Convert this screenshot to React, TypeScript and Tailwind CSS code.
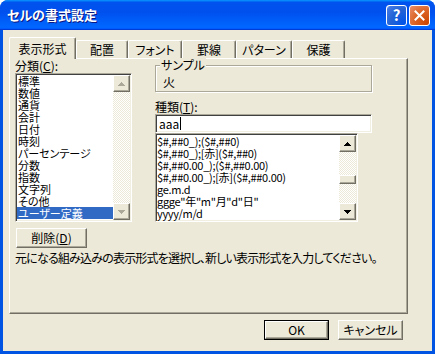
import React from "react";

const raised =
  "bg-[#ECE9D8] border border-t-white border-l-white border-r-[#716F64] border-b-[#716F64] shadow-[inset_-1px_-1px_#ACA899]";
const sunken =
  "border border-t-[#ACA899] border-l-[#ACA899] border-r-white border-b-white shadow-[inset_1px_1px_#404040,inset_-1px_-1px_#F1EFE2]";
const track =
  "bg-[image:repeating-conic-gradient(#fff_0_25%,#ECE9D8_0_50%)] bg-[length:2px_2px]";

const categories = [
  "標準",
  "数値",
  "通貨",
  "会計",
  "日付",
  "時刻",
  "パーセンテージ",
  "分数",
  "指数",
  "文字列",
  "その他",
  "ユーザー定義",
];

const formats = [
  "$#,##0_);($#,##0)",
  "$#,##0_);[赤]($#,##0)",
  "$#,##0.00_);($#,##0.00)",
  "$#,##0.00_);[赤]($#,##0.00)",
  "ge.m.d",
  'ggge"年"m"月"d"日"',
  "yyyy/m/d",
];

const tabs = [
  { label: "配置", w: "w-[52px]" },
  { label: "フォント", w: "w-[54px]" },
  { label: "罫線", w: "w-[54px]" },
  { label: "パターン", w: "w-[56px]" },
  { label: "保護", w: "w-[53px]" },
];

function Arrow({ up, disabled }: { up?: boolean; disabled?: boolean }) {
  const c = disabled ? "#ACA899" : "#000";
  const rows = up ? [0, 1, 2, 3] : [3, 2, 1, 0];
  return (
    <svg width="7" height="4" viewBox="0 0 7 4" shapeRendering="crispEdges">
      {rows.map((r, i) => (
        <rect key={i} x={3 - r} y={i} width={r * 2 + 1} height="1" fill={c} />
      ))}
    </svg>
  );
}

function ScrollBtn({ up, disabled }: { up?: boolean; disabled?: boolean }) {
  return (
    <div className={`${raised} flex h-[17px] w-[17px] items-center justify-center`}>
      <Arrow up={up} disabled={disabled} />
    </div>
  );
}

function Button({ children, isDefault }: { children: React.ReactNode; isDefault?: boolean }) {
  return (
    <div className={isDefault ? "border border-black" : ""}>
      <div
        className={`${raised} flex items-center justify-center ${
          isDefault ? "h-[18px] w-[63px]" : "h-[20px] w-[65px]"
        }`}
      >
        {children}
      </div>
    </div>
  );
}

export default function App() {
  return (
    <div className="h-[357px] w-[435px] bg-white font-['Noto_Sans_CJK_JP',sans-serif] text-[12px] leading-[12px] text-black [font-feature-settings:'palt']">
      <div className="flex h-[354px] w-[435px] flex-col overflow-hidden rounded-t-[8px] bg-[#0054E3]">
        {/* title bar */}
        <div className="flex h-[30px] items-center bg-[image:linear-gradient(180deg,#0997ff,#0053ee_8%,#0050ee_40%,#06f_88%,#06f_93%,#005bff_95%,#003dd7_96%,#003dd7)] pl-[7px] pr-[5px]">
          <span className="flex-1 text-[13px] font-bold text-white [text-shadow:1px_1px_#0A1883]">
            セルの書式設定
          </span>
          <div className="flex gap-[2px]">
            <div className="flex h-[21px] w-[21px] items-center justify-center rounded-[3px] border border-white bg-[image:radial-gradient(circle_at_90%_90%,#0054E9_0%,#2263D5_55%,#4479E4_90%,#fff_100%)] text-[15px] font-bold text-white">
              ?
            </div>
            <div className="flex h-[21px] w-[21px] items-center justify-center rounded-[3px] border border-white bg-[image:radial-gradient(circle_at_90%_90%,#CC4600_0%,#DC6527_55%,#E88F6E_100%)]">
              <svg width="11" height="11" viewBox="0 0 11 11">
                <path d="M1.5 1.5L9.5 9.5M9.5 1.5L1.5 9.5" stroke="#fff" strokeWidth="2" strokeLinecap="square" />
              </svg>
            </div>
          </div>
        </div>

        {/* body */}
        <div className="mx-[3px] mb-[3px] flex-1 bg-[#ECE9D8] pl-[6px] pt-[7px]">
          <div className="flex h-[21px] items-end">
            <div className="relative z-10 -mb-px flex h-[22px] w-[67px] items-center justify-center rounded-t-[2px] border-l border-r border-t border-l-white border-r-[#716F64] border-t-white bg-[#ECE9D8] shadow-[inset_-1px_0_#ACA899]">
              表示形式
            </div>
            {tabs.map((t) => (
              <div
                key={t.label}
                className={`flex h-[18px] ${t.w} items-center justify-center rounded-t-[2px] border-l border-r border-t border-l-white border-r-[#716F64] border-t-white shadow-[inset_-1px_0_#ACA899]`}
              >
                {t.label}
              </div>
            ))}
          </div>

          <div className="h-[256px] w-[399px] border border-b-[#716F64] border-l-white border-r-[#716F64] border-t-white pl-[5px] shadow-[inset_-1px_-1px_#ACA899]">
            <div className="flex">
              {/* left column */}
              <div className="w-[117px]">
                <div className="flex h-[14px] items-center">
                  分類(<span className="underline">C</span>):
                </div>
                <div className={`${sunken} flex h-[149px] bg-white p-[1px]`}>
                  <div className="flex-1 text-[11px]">
                    {categories.map((c, i) => (
                      <div
                        key={c}
                        className={`flex h-[12px] items-center whitespace-nowrap pl-[1px] ${
                          i === categories.length - 1 ? "bg-[#316AC5] text-white" : ""
                        }`}
                      >
                        {c}
                      </div>
                    ))}
                  </div>
                  <div className={`flex w-[17px] flex-col ${track}`}>
                    <ScrollBtn up disabled />
                    <div className="flex-1" />
                    <ScrollBtn disabled />
                  </div>
                </div>
              </div>

              {/* right column */}
              <div className="ml-[23px] w-[217px]">
                <div className="relative pt-[6px]">
                  <span className="absolute left-[5px] top-[-1px] bg-[#ECE9D8] px-[1px] leading-[14px]">
                    サンプル
                  </span>
                  <div className="h-[27px] border border-[#ACA899] pl-[7px] pt-[10px] shadow-[inset_1px_1px_white,1px_1px_white]">
                    火
                  </div>
                </div>
                <div className="mt-[8px] flex h-[14px] items-center">
                  種類(<span className="underline">T</span>):
                </div>
                <div className={`${sunken} flex h-[19px] items-center bg-white pl-[3px]`}>
                  aaa
                  <span className="ml-[1px] h-[13px] w-px bg-black" />
                </div>
                <div className={`${sunken} flex h-[89px] w-[203px] bg-white p-[1px]`}>
                  <div className="flex-1 text-[11px] tracking-[-0.3px]">
                    {formats.map((f) => (
                      <div key={f} className="flex h-[12px] items-center whitespace-nowrap">
                        {f}
                      </div>
                    ))}
                  </div>
                  <div className={`flex w-[17px] flex-col ${track}`}>
                    <ScrollBtn up />
                    <div className="h-[23px]" />
                    <div className={`${raised} h-[9px] w-[17px]`} />
                    <div className="flex-1" />
                    <ScrollBtn />
                  </div>
                </div>
              </div>
            </div>

            <div className="ml-[1px] mt-[6px] flex h-[20px] w-[71px] items-center justify-center">
              <div className={`${raised} flex h-[20px] w-[71px] items-center justify-center`}>
                削除(<span className="underline">D</span>)
              </div>
            </div>
            <div className="mt-[4px] whitespace-nowrap tracking-[-0.8px]">
              元になる組み込みの表示形式を選択し、新しい表示形式を入力してください。
            </div>
          </div>

          <div className="mt-[6px] flex w-[399px] justify-end gap-[9px] pr-[5px]">
            <Button isDefault>OK</Button>
            <Button>キャンセル</Button>
          </div>
        </div>
      </div>
    </div>
  );
}
